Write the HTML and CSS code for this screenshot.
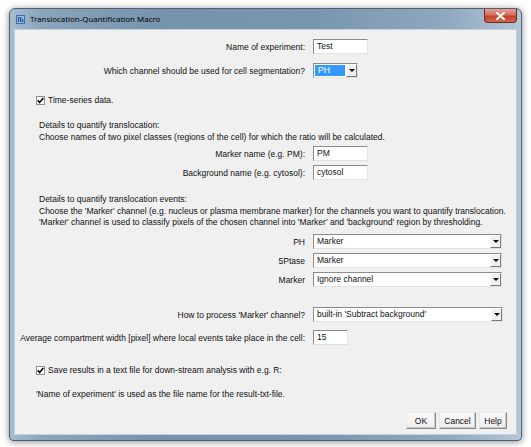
FILE: index.html
```html
<!DOCTYPE html>
<html>
<head>
<meta charset="utf-8">
<title>Translocation-Quantification Macro</title>
<link rel="stylesheet" href="styles.css">
</head>
<body>
<div class="window">
  <div class="titlebar">
    <svg class="app-icon" width="9" height="9" viewBox="0 0 9 9">
      <rect x="0.5" y="0.5" width="8" height="8" fill="#8fb8e4" stroke="#3f6fa8"/>
      <rect x="2" y="2" width="1.3" height="5" fill="#2b5a94"/>
      <rect x="4" y="2" width="1.3" height="5" fill="#2b5a94"/>
      <rect x="6" y="4" width="1.3" height="3" fill="#2b5a94"/>
    </svg>
    <span class="title">Translocation-Quantification Macro</span>
    <div class="close"><svg width="9" height="8" viewBox="0 0 9 8"><path d="M1 0.8 L8 7.2 M8 0.8 L1 7.2" stroke="#fff" stroke-width="2" stroke-linecap="square"/></svg></div>
  </div>
  <div class="content">
    <div class="row r-name">
      <span class="lbl">Name of experiment:</span>
      <div class="field w-name">Test</div>
    </div>
    <div class="row r-seg">
      <span class="lbl">Which channel should be used for cell segmentation?</span>
      <div class="combo small"><span class="sel">PH</span><span class="arrow"><i></i></span></div>
    </div>
    <div class="check r-ts">
      <span class="box"><svg width="7" height="7" viewBox="0 0 7 7"><path d="M0.8 3.2 L2.6 5.4 L6.3 0.9" fill="none" stroke="#000" stroke-width="1.6"/></svg></span>
      <span>Time-series data.</span>
    </div>
    <div class="para p1">
      <div>Details to quantify translocation:</div>
      <div>Choose names of two pixel classes (regions of the cell) for which the ratio will be calculated.</div>
    </div>
    <div class="row r-marker">
      <span class="lbl">Marker name (e.g. PM):</span>
      <div class="field w-name">PM</div>
    </div>
    <div class="row r-bg">
      <span class="lbl">Background name (e.g. cytosol):</span>
      <div class="field w-name">cytosol</div>
    </div>
    <div class="para p2">
      <div>Details to quantify translocation events:</div>
      <div>Choose the 'Marker' channel (e.g. nucleus or plasma membrane marker) for the channels you want to quantify translocation.</div>
      <div>'Marker' channel is used to classify pixels of the chosen channel into 'Marker' and 'background' region by thresholding.</div>
    </div>
    <div class="row r-ph">
      <span class="lbl">PH</span>
      <div class="combo wide"><span class="val">Marker</span><span class="arrow"><i></i></span></div>
    </div>
    <div class="row r-ch">
      <span class="lbl">5Ptase</span>
      <div class="combo wide"><span class="val">Marker</span><span class="arrow"><i></i></span></div>
    </div>
    <div class="row r-ch">
      <span class="lbl">Marker</span>
      <div class="combo wide"><span class="val">Ignore channel</span><span class="arrow"><i></i></span></div>
    </div>
    <div class="row r-how">
      <span class="lbl">How to process 'Marker' channel?</span>
      <div class="combo wider"><span class="val">built-in 'Subtract background'</span><span class="arrow"><i></i></span></div>
    </div>
    <div class="row r-avg">
      <span class="lbl">Average compartment width [pixel] where local events take place in the cell:</span>
      <div class="field w-avg">15</div>
    </div>
    <div class="check r-save">
      <span class="box"><svg width="7" height="7" viewBox="0 0 7 7"><path d="M0.8 3.2 L2.6 5.4 L6.3 0.9" fill="none" stroke="#000" stroke-width="1.6"/></svg></span>
      <span>Save results in a text file for down-stream analysis with e.g. R:</span>
    </div>
    <div class="note">'Name of experiment' is used as the file name for the result-txt-file.</div>
    <div class="buttons">
      <button class="btn b-ok">OK</button>
      <button class="btn b-cancel">Cancel</button>
      <button class="btn b-help">Help</button>
    </div>
  </div>
</div>
</body>
</html>
```

FILE: styles.css
```css
html, body {
  margin: 0;
  padding: 0;
  background: #ffffff;
}

body {
  width: 531px;
  height: 447px;
  overflow: hidden;
}

.window {
  margin: 8px 0 0 9px;
  width: 513px;
  height: 433px;
  box-sizing: border-box;
  border: 1px solid #4e6173;
  border-radius: 6px 6px 4px 4px;
  background: linear-gradient(to right, #a7bdd0 0%, #8aa5bc 6%, #7793ab 30%, #7a96ae 60%, #8ea8be 85%, #b3c7d8 100%);
  box-shadow: 0 1px 7px rgba(0, 0, 0, 0.45);
  display: flex;
  flex-direction: column;
}

.titlebar {
  height: 20px;
  display: flex;
  align-items: center;
  padding-left: 6px;
  flex: none;
}

.app-icon {
  display: block;
  margin-right: 5px;
}

.title {
  font-family: "Noto Sans", "Liberation Sans", sans-serif;
  font-size: 7.9px;
  color: #000;
}

.close {
  margin-left: auto;
  margin-right: 4px;
  align-self: flex-start;
  width: 33px;
  height: 14px;
  box-sizing: border-box;
  border: 1px solid #6b2b22;
  border-top: none;
  border-radius: 0 0 4px 4px;
  background: linear-gradient(to bottom, #e5a092 0%, #d4705c 45%, #c2402a 55%, #d26a50 100%);
  display: flex;
  align-items: center;
  justify-content: center;
}

.close svg {
  display: block;
}

.content {
  flex: 1;
  margin: 0 4px 5px 4px;
  background: #f0f0f0;
  border: 1px solid #c4d2de;
  box-sizing: border-box;
  padding-top: 9px;
  font-family: "Liberation Sans", Arial, sans-serif;
  font-size: 8.5px;
  color: #111;
  display: flex;
  flex-direction: column;
}

.row {
  display: flex;
  align-items: center;
  height: 15px;
}

.lbl {
  width: 290px;
  text-align: right;
  margin-right: 8px;
  white-space: nowrap;
}

.field {
  height: 15px;
  box-sizing: border-box;
  background: #fff;
  border: 1px solid;
  border-color: #8c8c8c #e3e3e3 #e3e3e3 #8c8c8c;
  padding: 0 3px;
  line-height: 13px;
}

.w-name { width: 55px; }
.w-avg { width: 35px; }

.combo {
  height: 15px;
  box-sizing: border-box;
  background: #fff;
  border: 1px solid;
  border-color: #8c8c8c #e3e3e3 #e3e3e3 #8c8c8c;
  display: flex;
  align-items: stretch;
  line-height: 13px;
}

.combo.small { width: 45px; }
.combo.wide { width: 189px; }
.combo.wider { width: 190px; }

.combo .val {
  flex: 1;
  padding-left: 3px;
  white-space: nowrap;
}

.combo .sel {
  flex: 1;
  margin: 1px;
  background: #3399ff;
  color: #fff;
  padding-left: 3px;
  line-height: 11px;
}

.arrow {
  width: 11px;
  box-sizing: border-box;
  background: #f0f0f0;
  border: 1px solid;
  border-color: #ffffff #7a7a7a #7a7a7a #ffffff;
  display: flex;
  align-items: center;
  justify-content: center;
}

.arrow i {
  display: block;
  width: 0;
  height: 0;
  border-left: 3px solid transparent;
  border-right: 3px solid transparent;
  border-top: 3px solid #000;
}

.check {
  display: flex;
  align-items: center;
  height: 12px;
  padding-left: 21px;
}

.box {
  width: 9px;
  height: 9px;
  box-sizing: border-box;
  background: #fff;
  border: 1px solid #8f8f8f;
  display: flex;
  align-items: center;
  justify-content: center;
  margin-right: 3px;
}

.box svg { display: block; }

.para {
  padding-left: 24px;
  white-space: nowrap;
}

.r-name { margin-top: 0; }
.r-seg { margin-top: 9px; }
.r-ts { margin-top: 16px; }

.p1 {
  margin-top: 13px;
  line-height: 12px;
}

.r-marker { margin-top: 3px; }
.r-bg { margin-top: 4px; }

.p2 {
  margin-top: 14px;
  line-height: 11.5px;
}

.r-ph { margin-top: 5.5px; }
.r-ch { margin-top: 4px; }
.r-how { margin-top: 20px; }
.r-avg { margin-top: 8px; }
.r-save { margin-top: 19px; }

.note {
  margin-top: 12px;
  padding-left: 21px;
  line-height: 12px;
  white-space: nowrap;
}

.buttons {
  margin-top: 12px;
  display: flex;
  justify-content: flex-end;
  gap: 3px;
  padding-right: 9px;
}

.btn {
  height: 17px;
  box-sizing: border-box;
  padding: 0;
  margin: 0;
  font-family: "Liberation Sans", Arial, sans-serif;
  font-size: 8.5px;
  color: #111;
  background: linear-gradient(to bottom, #fbfbfb, #ececec);
  border: 1px solid;
  border-color: #e8e8e8 #8a8a8a #8a8a8a #e8e8e8;
  box-shadow: inset -1px -1px 0 #c8c8c8;
}

.b-ok { width: 30px; }
.b-cancel { width: 37px; }
.b-help { width: 28px; }
```
